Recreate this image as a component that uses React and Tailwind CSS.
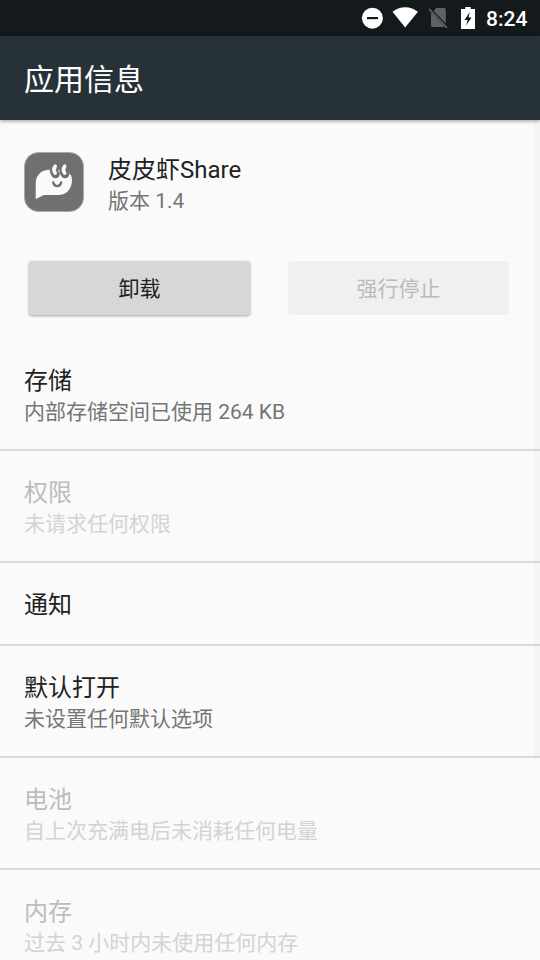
const rows = [
  { title: "存储", summary: "内部存储空间已使用 264 KB" },
  { title: "权限", summary: "未请求任何权限", disabled: true },
  { title: "通知" },
  { title: "默认打开", summary: "未设置任何默认选项" },
  { title: "电池", summary: "自上次充满电后未消耗任何电量", disabled: true },
  { title: "内存", summary: "过去 3 小时内未使用任何内存", disabled: true },
];

function StatusBar() {
  return (
    <div className="flex h-9 shrink-0 items-center justify-end bg-[#14191c] pr-3 text-white">
      {/* do not disturb */}
      <svg className="mr-[9px] h-[22px] w-[22px]" viewBox="0 0 22 22">
        <circle cx="11.4" cy="11.2" r="10.5" fill="#fff" />
        <rect x="6" y="10" width="11" height="2.2" fill="#14191c" />
      </svg>
      {/* wifi */}
      <svg className="mr-[10px] h-[22px] w-[26px]" viewBox="0 0 26 22">
        <path d="M13.2 20.6 0.5 4.800C4 2 8.400 0.200 13.200 0.200s9.200 1.800 12.700 4.600z" fill="#fff" />
      </svg>
      {/* no sim */}
      <svg className="mr-[13px] h-[22px] w-5" viewBox="0 0 20 22">
        <path d="M8.2 1H16a1.800 1.800 0 0 1 1.800 1.800V16.500L5.600 4z" fill="#5f6263" />
        <path d="M3 5.500 16.800 19.900a2 2 0 0 1-.8.200H4.800A1.800 1.800 0 0 1 3 18.300z" fill="#5f6263" />
        <path d="M1 2 19 20.800" stroke="#5f6263" strokeWidth="1.700" />
      </svg>
      {/* battery */}
      <svg className="mr-[11px] mb-px h-[22px] w-[14px]" viewBox="0 0 14 22">
        <path d="M4.300 0h5.400v2H14v20H0V2h4.300z" fill="#fff" />
        <path d="M8.800 5 3.500 13h3.200L5 18.500l5.600-8H7.600z" fill="#14191c" />
      </svg>
      <span className="w-[42px] pt-0.5 text-[21px] leading-[34px] font-medium">8:24</span>
    </div>
  );
}

function AppIcon() {
  return (
    <svg className="h-[60px] w-[60px]" viewBox="0 0 60 60">
      <rect x="0.5" y="0.5" width="59" height="59" rx="14" fill="#707070" stroke="#a8a8a8" />
      <path
        d="M11.700 47V31.500C11.700 23 17.500 17.800 25.500 17.800H40c3 0 4.500 3.500 7 5.500 3 8-1 19.700-12.500 19.700H21.500c-1.500 0-2.500.400-3.500 1z"
        fill="#fafafa"
      />
      <g fill="none" strokeLinecap="round">
        <path d="M31.200 14.500c-1.700 2.500-1.700 5.500 .3 7.600M40.700 14.500c-1.700 2.500-1.700 5.500 .3 7.600" stroke="#707070" strokeWidth="8.400" />
        <path d="M31.200 14.200c-1.700 2.500-1.700 4.800 0 7M40.700 14.200c-1.700 2.500-1.700 4.800 0 7" stroke="#fafafa" strokeWidth="3.600" />
        <path d="M29.200 30.500c1.200 4.800 6.800 4.800 8 0" stroke="#707070" strokeWidth="2.400" />
      </g>
    </svg>
  );
}

function Row({ title, summary, disabled }) {
  return (
    <div className="shrink-0 border-b-2 border-[#dadada] px-6 pt-[26px]">
      <div className={`text-2xl leading-8 ${disabled ? "text-[#bcbcbc]" : "text-[#212121]"}`}>
        {title}
      </div>
      {summary ? (
        <div className={`pb-[21px] text-[21px] leading-[31px] ${disabled ? "text-[#d3d3d3]" : "text-[#757575]"}`}>
          {summary}
        </div>
      ) : (
        <div className="h-[23px]" />
      )}
    </div>
  );
}

export default function App() {
  return (
    <div className="relative flex h-[960px] w-[540px] flex-col overflow-hidden bg-[#fafafa] font-[Roboto,'Noto_Sans_CJK_SC',sans-serif]">
      <StatusBar />

      <header className="z-10 flex h-[84px] shrink-0 items-center bg-[#263238] px-6 pt-1 shadow-[0_1px_4px_rgba(0,0,0,0.4)]">
        <h1 className="text-[30px] leading-10 text-white">应用信息</h1>
      </header>

      <section className="flex h-[140px] shrink-0 gap-6 px-6 pt-8">
        <AppIcon />
        <div>
          <div className="mt-0.5 text-2xl leading-8 text-[#212121]">皮皮虾Share</div>
          <div className="text-[21px] leading-[30px] text-[#757575]">版本 1.4</div>
        </div>
      </section>

      <div className="flex h-[79px] shrink-0 gap-[38px] pt-px pl-[29px]">
        <button className="h-[54px] w-[221px] rounded-[3px] bg-[#d6d7d7] pt-1 text-[21px] text-[#212121] shadow-[0_1px_3px_rgba(0,0,0,0.35)]">
          卸载
        </button>
        <button disabled className="h-[54px] w-[221px] rounded-[3px] bg-[#f0f0f0] pt-1 text-[21px] text-[#bababa]">
          强行停止
        </button>
      </div>

      <main className="flex flex-col">
        {rows.map((row) => (
          <Row key={row.title} {...row} />
        ))}
      </main>

      {/* scrollbar */}
      <div className="absolute top-[120px] right-0 h-[637px] w-1.5 bg-black/2" />
    </div>
  );
}
